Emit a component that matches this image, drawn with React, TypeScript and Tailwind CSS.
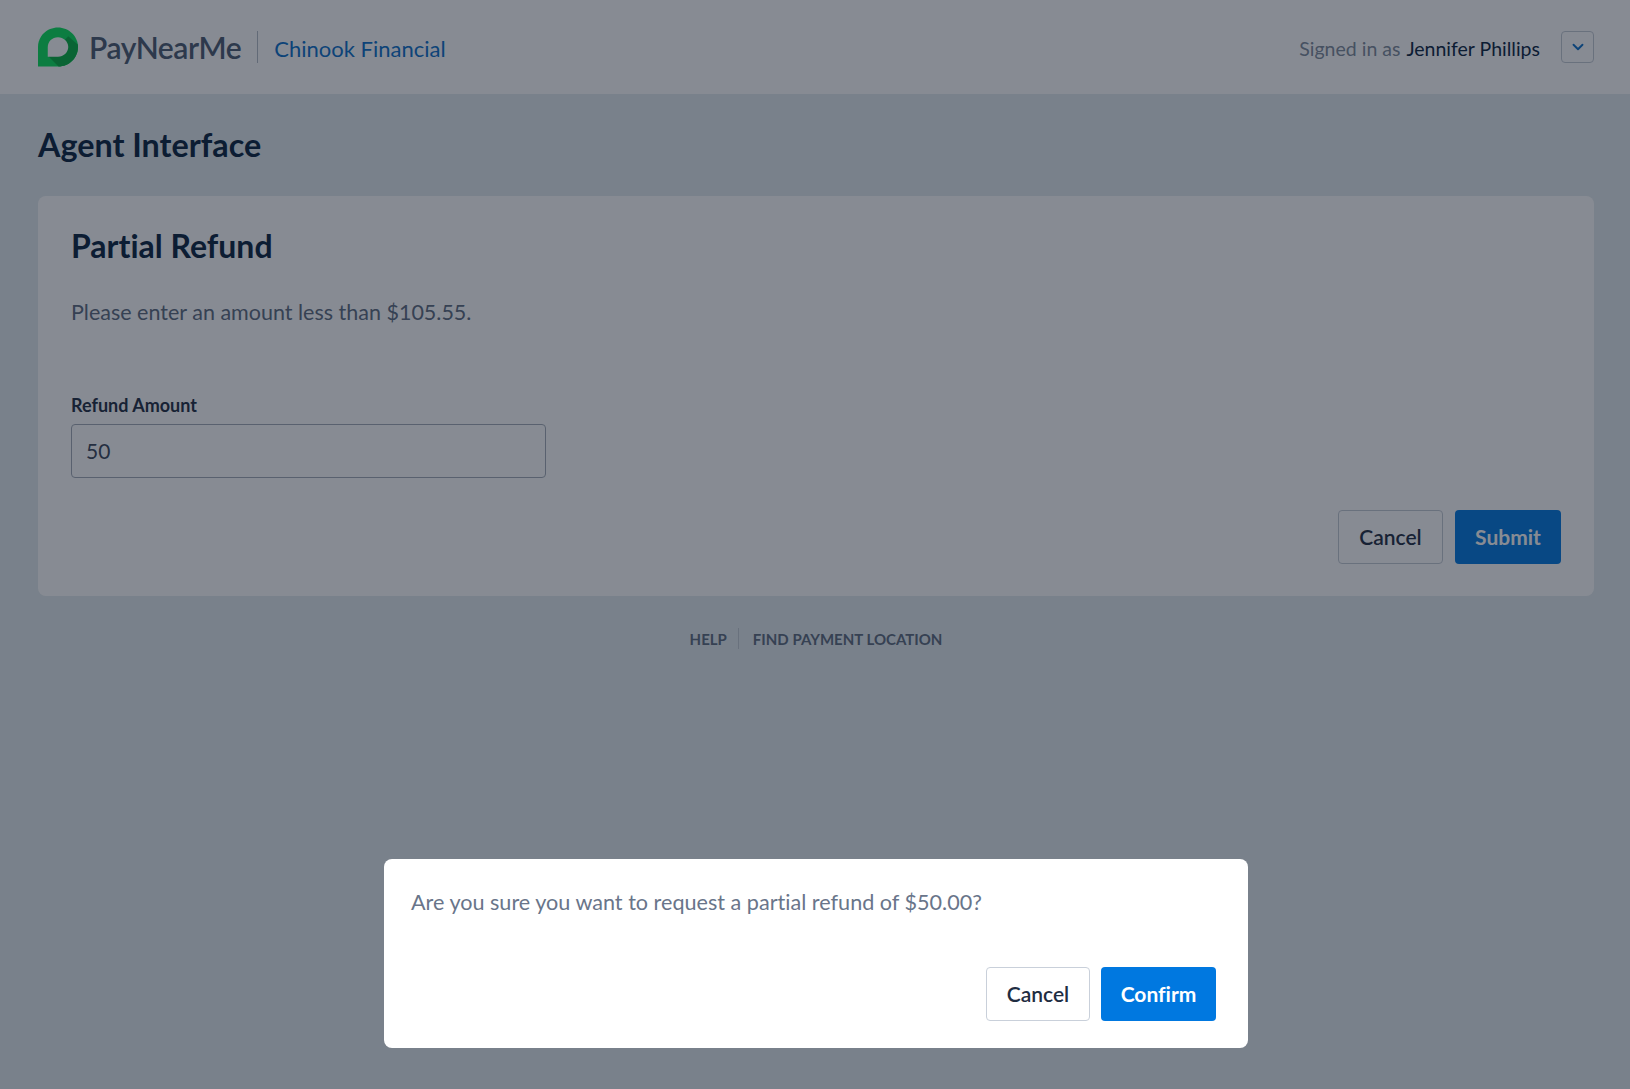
import React from "react";
import { ChevronDown } from "lucide-react";

function Logo() {
  return (
    <svg width="40" height="40" viewBox="0 0 41 40" className="shrink-0">
      <path d="M0 40V20C0 9 9 0 20.500 0C31.500 0 41 9 41 20C41 31 32 40 20.500 40Z" fill="#08e35b" />
      <path d="M11 30L21 40C32 40 41 31 41 20C41 19 41 18.500 40.800 17.500L31 9Z" fill="#05b141" />
      <path d="M10 30V20C10 14.500 14.500 10 20.500 10C26 10 31 14.500 31 20C31 25.500 26 30 20.500 30Z" fill="#ffffff" />
    </svg>
  );
}

export default function App() {
  return (
    <div className="relative min-h-[1089px] bg-[#e3ebee] font-['Lato','Liberation_Sans',sans-serif] [font-variant-ligatures:none] text-[#08233f]">
      <header className="h-[94px] bg-white flex items-center justify-between pl-[38px] pr-[36px]">
        <div className="flex items-center">
          <Logo />
          <span className="ml-[11px] text-[30px] font-semibold text-[#4a5a70] tracking-[-0.4px]">PayNearMe</span>
          <span className="ml-[16px] h-[32px] w-px bg-[#b5bcc6]" />
          <span className="ml-[16px] mt-[2px] text-[22px] text-[#0a6fc9]">Chinook Financial</span>
        </div>
        <div className="flex items-center">
          <span className="mt-[3px] text-[19.500px] text-[#7d8a9a]">Signed in as</span>
          <span className="ml-[6px] mt-[3px] text-[19.500px] text-[#08233f]">Jennifer Phillips</span>
          <button className="ml-[21px] w-[33px] h-[32px] rounded border border-[#c3cad3] flex items-center justify-center text-[#0a6fc9]">
            <ChevronDown className="w-[18px] h-[18px]" strokeWidth={2.5} />
          </button>
        </div>
      </header>

      <main className="px-[38px] pt-[29px] pr-[36px]">
        <h1 className="text-[32.300px] leading-[44px] font-bold">Agent Interface</h1>

        <section className="mt-[29px] h-[400px] bg-white rounded-lg pt-[30px] px-[33px]">
          <h2 className="text-[32px] leading-[40px] font-bold">Partial Refund</h2>
          <p className="mt-[30px] text-[21.500px] leading-[32px] text-[#5c6b7e]">Please enter an amount less than $105.55.</p>
          <label className="block mt-[65px] text-[18px] leading-[24px] font-bold text-[#1f2d42]">Refund Amount</label>
          <div className="mt-[7px] w-[475px] h-[54px] rounded border border-[#a3abb6] flex items-center px-[14px] text-[21px] text-[#3a475a]">50</div>
          <div className="mt-[32px] flex justify-end gap-[12px]">
            <button className="w-[105px] h-[54px] rounded border border-[#c3cad3] text-[21px] font-semibold text-[#1f2d42]">Cancel</button>
            <button className="w-[106px] h-[54px] rounded bg-[#0078e0] text-[21px] font-bold text-white">Submit</button>
          </div>
        </section>

        <nav className="mt-[32px] flex justify-center items-center text-[15px] leading-[20px] font-bold text-[#5c6b7e]">
          <span>HELP</span>
          <span className="ml-[11px] mr-[14px] h-[21px] w-px bg-[#c3cad3]" />
          <span>FIND PAYMENT LOCATION</span>
        </nav>
      </main>

      <div className="absolute inset-0 bg-[#0f1727]/50 flex items-end justify-center pb-[41px] pl-[2px]">
        <div className="w-[864px] h-[189px] bg-white rounded-lg px-[27px] pt-[27px]">
          <p className="text-[21.600px] leading-[32px] text-[#69758a]">Are you sure you want to request a partial refund of $50.00?</p>
          <div className="mt-[49px] flex justify-end gap-[11px] pr-[5px]">
            <button className="w-[104px] h-[54px] rounded border border-[#c9d0da] text-[21px] font-semibold text-[#1f2d42]">Cancel</button>
            <button className="w-[115px] h-[54px] rounded bg-[#0078e0] text-[21px] font-bold text-white">Confirm</button>
          </div>
        </div>
      </div>
    </div>
  );
}
